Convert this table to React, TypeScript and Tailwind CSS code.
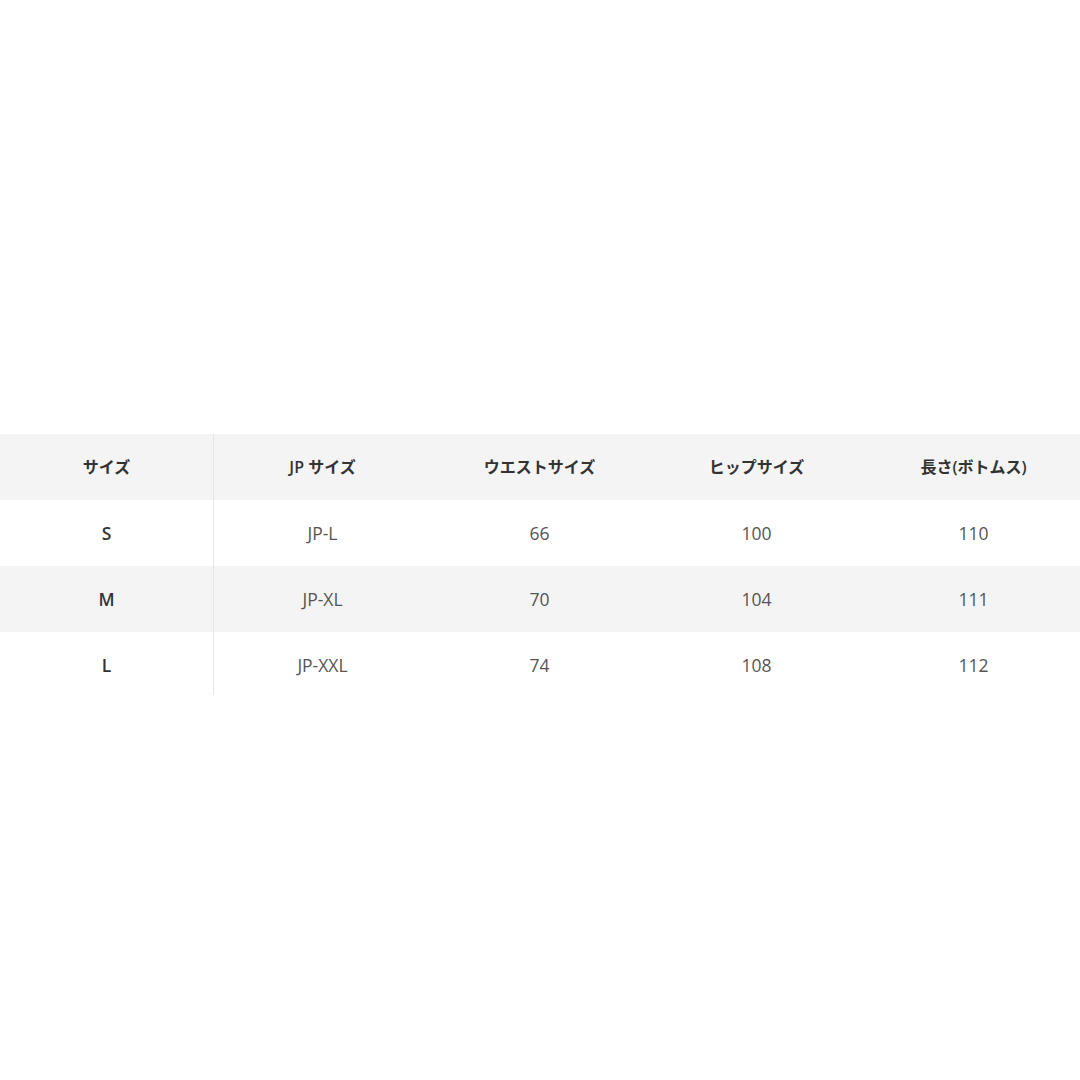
import React from "react";

const headers = ["サイズ", "JP サイズ", "ウエストサイズ", "ヒップサイズ", "長さ(ボトムス)"];
const rows = [
  ["S", "JP-L", "66", "100", "110"],
  ["M", "JP-XL", "70", "104", "111"],
  ["L", "JP-XXL", "74", "108", "112"],
];

export default function App() {
  return (
    <div
      className="w-[1080px] h-[1080px] bg-white pt-[434px] overflow-hidden"
      style={{ fontFamily: '"Open Sans", "Noto Sans CJK JP", sans-serif' }}
    >
      <div className="grid grid-cols-[214px_217px_217px_217px_217px] w-[1082px]">
        {headers.map((h, i) => (
          <div
            key={h}
            className={`h-[66px] bg-[#f4f4f4] flex items-center justify-center text-[16px] font-semibold text-[#333] ${i === 0 ? "border-r border-[#e6e6e6]" : ""}`}
          >
            {h}
          </div>
        ))}
        {rows.map((r, ri) =>
          r.map((c, ci) => (
            <div
              key={`${ri}-${ci}`}
              className={`${ri === 2 ? "h-[63px] pt-[3px]" : "h-[66px]"} flex items-center justify-center text-[17.5px] ${ri === 1 ? "bg-[#f4f4f4]" : "bg-white"} ${ci === 0 ? "font-semibold text-[#333] border-r border-[#e6e6e6]" : "text-[#555]"}`}
            >
              {c}
            </div>
          ))
        )}
      </div>
    </div>
  );
}
